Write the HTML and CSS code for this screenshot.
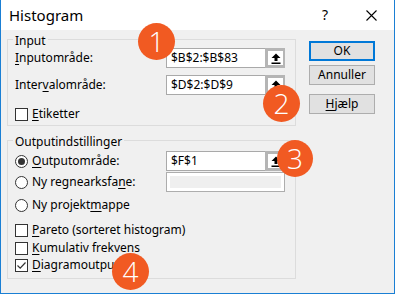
FILE: index.html
```html
<!DOCTYPE html>
<html lang="da">
<head>
<meta charset="utf-8">
<title>Histogram</title>
<link rel="stylesheet" href="styles.css">
</head>
<body>
<div class="window">
  <div class="titlebar">
    <span class="title">Histogram</span>
    <span class="help">?</span>
    <span class="close"><svg width="11" height="11" viewBox="0 0 11 11"><path d="M0.5 0.5 L10.5 10.5 M10.5 0.5 L0.5 10.5" stroke="#000" stroke-width="1.1" fill="none"/></svg></span>
  </div>
  <div class="content">
    <div class="main">
      <div class="group group-input">
        <div class="legend">Input</div>
        <div class="row row-1">
          <span class="lbl"><u>I</u>nputområde:</span>
          <div class="refedit"><span class="val">$B$2:$B$83</span><span class="refbtn"><svg width="10" height="11" viewBox="0 0 10 11"><path d="M5 0.5 L9.5 5 L6.5 5 L6.5 8 L3.5 8 L3.5 5 L0.5 5 Z" fill="#000"/><rect x="0.5" y="9.5" width="9" height="1.5" fill="#000"/></svg></span></div>
        </div>
        <div class="row row-2">
          <span class="lbl">Inter<u>v</u>alområde:</span>
          <div class="refedit"><span class="val">$D$2:$D$9</span><span class="refbtn"><svg width="10" height="11" viewBox="0 0 10 11"><path d="M5 0.5 L9.5 5 L6.5 5 L6.5 8 L3.5 8 L3.5 5 L0.5 5 Z" fill="#000"/><rect x="0.5" y="9.5" width="9" height="1.5" fill="#000"/></svg></span></div>
        </div>
        <div class="opt opt-etiketter"><span class="check"></span><span><u>E</u>tiketter</span></div>
      </div>
      <div class="group group-output">
        <div class="legend">Outputindstillinger</div>
        <div class="row row-out1">
          <span class="lbl"><span class="radio checked"></span><span><u>O</u>utputområde:</span></span>
          <div class="refedit"><span class="val">$F$1</span><span class="refbtn"><svg width="10" height="11" viewBox="0 0 10 11"><path d="M5 0.5 L9.5 5 L6.5 5 L6.5 8 L3.5 8 L3.5 5 L0.5 5 Z" fill="#000"/><rect x="0.5" y="9.5" width="9" height="1.5" fill="#000"/></svg></span></div>
        </div>
        <div class="row row-out2">
          <span class="lbl"><span class="radio"></span><span>Ny regnearksfa<u>n</u>e:</span></span>
          <div class="refedit disabled"></div>
        </div>
        <div class="opt opt-proj"><span class="radio"></span><span>Ny projekt<u>m</u>appe</span></div>
        <div class="opt opt-pareto"><span class="check"></span><span><u>P</u>areto (sorteret histogram)</span></div>
        <div class="opt opt-kum"><span class="check"></span><span><u>K</u>umulativ frekvens</span></div>
        <div class="opt opt-diag"><span class="check checked"><svg width="11" height="11" viewBox="0 0 11 11"><path d="M1.5 5.5 L4.2 8.2 L9.5 2.5" stroke="#333" stroke-width="1.2" fill="none"/></svg></span><span><u>D</u>iagramoutput</span></div>
      </div>
    </div>
    <div class="buttons">
      <div class="btn btn-ok">OK</div>
      <div class="btn btn-cancel">Annuller</div>
      <div class="btn btn-help"><u>H</u>jælp</div>
    </div>
  </div>
  <div class="badge badge-1">1</div>
  <div class="badge badge-2">2</div>
  <div class="badge badge-3">3</div>
  <div class="badge badge-4">4</div>
</div>
</body>
</html>
```

FILE: styles.css
```css
* { box-sizing: border-box; }
html, body { margin: 0; padding: 0; }
body {
  width: 395px;
  height: 294px;
  overflow: hidden;
  font-family: "Noto Sans", "Open Sans", sans-serif;
  font-size: 12px;
  color: #000;
  background: #fff;
}
u { text-decoration: underline; text-underline-offset: 2px; text-decoration-thickness: 1px; }

.window {
  position: relative;
  width: 395px;
  height: 294px;
  border: 1px solid #1a7fd4;
  border-top: none;
  display: flex;
  flex-direction: column;
  background: #f0f0f0;
}

.titlebar {
  height: 30px;
  flex: none;
  background: #fff;
  display: flex;
  align-items: center;
  padding-left: 8px;
}
.title { font-size: 15px; flex: 1; padding-bottom: 1px; }
.help { font-size: 14px; width: 14px; margin-right: 30px; padding-bottom: 1px; }
.close { width: 11px; height: 11px; margin-right: 17px; display: flex; }

.content {
  flex: 1;
  display: flex;
  align-items: flex-start;
}
.main {
  width: 289px;
  margin-left: 6px;
}

.group {
  border: 1px solid #dcdcdc;
  padding: 0 0 0 7px;
}
.group-input { margin-top: 9px; padding-bottom: 4px; height: 87px; }
.group-output { margin-top: 14px; height: 139px; }

.legend {
  width: fit-content;
  margin: -6px 0 0 -2px;
  padding: 0 2px;
  height: 14px;
  line-height: 14px;
  background: #f0f0f0;
}

.row {
  display: flex;
  align-items: center;
  height: 20px;
}
.lbl {
  width: 151px;
  display: flex;
  align-items: center;
  line-height: 14px;
}
.row-2 { margin-top: 7px; }
.row-out1 { margin-top: 2px; }
.row-out2 { margin-top: 1px; }

.refedit {
  width: 119px;
  height: 20px;
  border: 1px solid #a9a9a9;
  background: #fff;
  display: flex;
}
.refedit .val {
  flex: 1;
  padding-left: 4px;
  line-height: 18px;
}
.refbtn {
  width: 20px;
  margin: -1px -1px -1px 0;
  border: 3px solid #b5b5b5;
  border-right-width: 2px;
  background: #fff;
  display: flex;
  align-items: center;
  justify-content: center;
}
.refedit.disabled {
  border-color: #adadad;
  background: #efefef;
  box-shadow: inset 0 0 0 3px #fff;
}

.opt {
  display: flex;
  align-items: center;
  height: 14px;
  line-height: 14px;
}
.opt-etiketter { margin-top: 12px; }
.opt-proj { margin-top: 6px; }
.opt-pareto { margin-top: 11px; }
.opt-kum { margin-top: 4px; }
.opt-diag { margin-top: 3px; }

.check {
  width: 13px;
  height: 13px;
  flex: none;
  border: 1px solid #333;
  background: #fff;
  margin-right: 4px;
  display: flex;
  align-items: center;
  justify-content: center;
}
.radio {
  width: 13px;
  height: 13px;
  flex: none;
  border: 1px solid #333;
  border-radius: 50%;
  background: #fff;
  margin-right: 4px;
  display: flex;
  align-items: center;
  justify-content: center;
}
.radio.checked::after {
  content: "";
  width: 7px;
  height: 7px;
  border-radius: 50%;
  background: #333;
}

.buttons {
  width: 66px;
  margin-left: 13px;
  margin-top: 11px;
  display: flex;
  flex-direction: column;
}
.btn {
  height: 20px;
  border: 1px solid #adadad;
  background: #e1e1e1;
  display: flex;
  align-items: center;
  justify-content: center;
  line-height: 14px;
}
.btn-ok { border: 2px solid #0078d7; }
.btn-cancel { margin-top: 4px; }
.btn-help { margin-top: 9px; }

.badge {
  position: absolute;
  width: 37px;
  height: 37px;
  border-radius: 50%;
  background: #f15a22;
  color: #fff;
  font-family: "Open Sans", "Noto Sans", sans-serif;
  font-weight: 300;
  font-size: 28px;
  line-height: 37px;
  text-align: center;
}
.badge-1 { left: 137px; top: 23px; }
.badge-2 { left: 262px; top: 85px; }
.badge-3 { left: 276px; top: 140px; width: 36px; height: 37px; }
.badge-4 { left: 111px; top: 253px; }
```
